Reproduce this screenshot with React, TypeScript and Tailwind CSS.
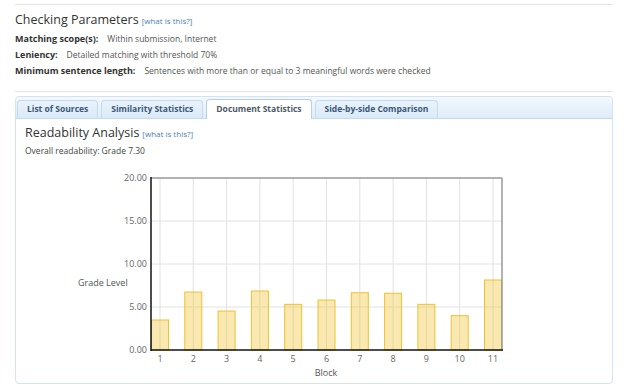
import React from 'react'

const blocks = [3.49, 6.74, 4.53, 6.86, 5.31, 5.81, 6.66, 6.59, 5.31, 3.99, 8.14]

const params = [
  { label: 'Matching scope(s):', value: 'Within submission, Internet' },
  { label: 'Leniency:', value: 'Detailed matching with threshold 70%' },
  {
    label: 'Minimum sentence length:',
    value: 'Sentences with more than or equal to 3 meaningful words were checked',
  },
]

const tabs = ['List of Sources', 'Similarity Statistics', 'Document Statistics', 'Side-by-side Comparison']

function ReadabilityChart() {
  // plot box in svg coords
  const left = 135
  const right = 486
  const top = 18
  const bottom = 190
  const unit = (bottom - top) / 20
  const step = 33.3
  const first = 144

  return (
    <svg width="598" height="220" className="block" fontFamily="'Open Sans', sans-serif">
      {/* grid */}
      {[15, 10, 5].map((v) => (
        <line key={v} x1={left} x2={right} y1={bottom - v * unit} y2={bottom - v * unit} stroke="#e2e2e2" strokeWidth="1" />
      ))}
      {blocks.map((_, i) => (
        <line key={i} x1={first + i * step} x2={first + i * step} y1={top} y2={bottom} stroke="#e2e2e2" strokeWidth="1" />
      ))}

      {/* bars */}
      {blocks.map((v, i) => {
        const cx = first + i * step
        const h = v * unit
        return (
          <rect
            key={i}
            x={Math.max(cx - 8.5, left)}
            y={bottom - h}
            width={cx - 8.5 < left ? 17 - (left - (cx - 8.5)) : 17}
            height={h}
            fill="rgba(240,196,50,0.38)"
            stroke="#f0c030"
            strokeWidth="1"
          />
        )
      })}

      {/* frame */}
      <line x1={left} x2={right} y1={top} y2={top} stroke="#999" strokeWidth="1.5" />
      <line x1={right} x2={right} y1={top} y2={bottom} stroke="#999" strokeWidth="1.5" />
      <line x1={left} x2={left} y1={top - 1} y2={bottom + 1} stroke="#111" strokeWidth="1.5" />
      <line x1={left} x2={right + 1} y1={bottom} y2={bottom} stroke="#111" strokeWidth="1.5" />

      {/* y labels */}
      {[20, 15, 10, 5, 0].map((v) => (
        <text key={v} x={131} y={bottom - v * unit + 3} textAnchor="end" fontSize="9" fill="#666">
          {v.toFixed(2)}
        </text>
      ))}

      {/* x labels */}
      {blocks.map((_, i) => (
        <text key={i} x={first + i * step} y={202} textAnchor="middle" fontSize="9" fill="#666">
          {i + 1}
        </text>
      ))}

      <text x={62} y={126} fontSize="9" fill="#555">
        Grade Level
      </text>
      <text x={310} y={216} textAnchor="middle" fontSize="9" fill="#555">
        Block
      </text>
    </svg>
  )
}

export default function App() {
  return (
    <div className="w-[640px] h-[387px] overflow-hidden bg-white font-['Open_Sans',sans-serif] pl-[15px] pr-[27px]">
      <div className="mt-[4px] border-t border-[#e6e6e6]" />

      {/* Checking parameters */}
      <div className="mt-[6px] flex items-baseline h-[18px]">
        <span className="text-[12.5px] leading-[18px] text-[#333]">Checking Parameters</span>
        <a className="ml-[3px] text-[8px] text-[#4a7fb5]">[what is this?]</a>
      </div>
      <div className="flex flex-col mt-[2px]">
        {params.map((p) => (
          <div key={p.label} className="h-[16px] flex items-center leading-[12px]">
            <span className="text-[9px] font-bold text-[#333]">{p.label}</span>
            <span className="ml-[9px] text-[8.5px] text-[#555]">{p.value}</span>
          </div>
        ))}
      </div>

      <div className="mt-[12px] border-t border-[#e6e6e6]" />

      {/* Tabs */}
      <div className="mt-[4px] border border-[#d3e3f1] rounded-[4px]">
        <div className="h-[22px] flex items-end gap-[3px] pl-[1px] bg-gradient-to-b from-[#f3f8fd] to-[#dfecf8] border-b border-[#c5dbec] rounded-t-[4px]">
          {tabs.map((t) => {
            const active = t === 'Document Statistics'
            return (
              <div
                key={t}
                className={
                  active
                    ? 'h-[20px] -mb-[1px] px-[9px] flex items-center bg-white border border-b-0 border-[#b5cfe6] rounded-t-[4px] text-[8.5px] font-bold text-[#4d5b68]'
                    : 'h-[18px] px-[9px] flex items-center bg-gradient-to-b from-[#e9f3fc] to-[#d9eaf8] border border-b-0 border-[#c5dbec] rounded-t-[4px] text-[8.5px] font-bold text-[#3c5877]'
                }
              >
                {t}
              </div>
            )
          })}
        </div>

        <div className="pt-[5px] pb-[3px]">
          <div className="pl-[9px] flex items-baseline h-[18px]">
            <span className="text-[12.5px] leading-[18px] text-[#333]">Readability Analysis</span>
            <a className="ml-[3px] text-[8px] text-[#4a7fb5]">[what is this?]</a>
          </div>
          <div className="pl-[9px] mt-[3px] h-[12px] text-[8.5px] leading-[12px] text-[#444]">Overall readability: Grade 7.30</div>
          <div className="mt-[3px]">
            <ReadabilityChart />
          </div>
        </div>
      </div>
    </div>
  )
}
